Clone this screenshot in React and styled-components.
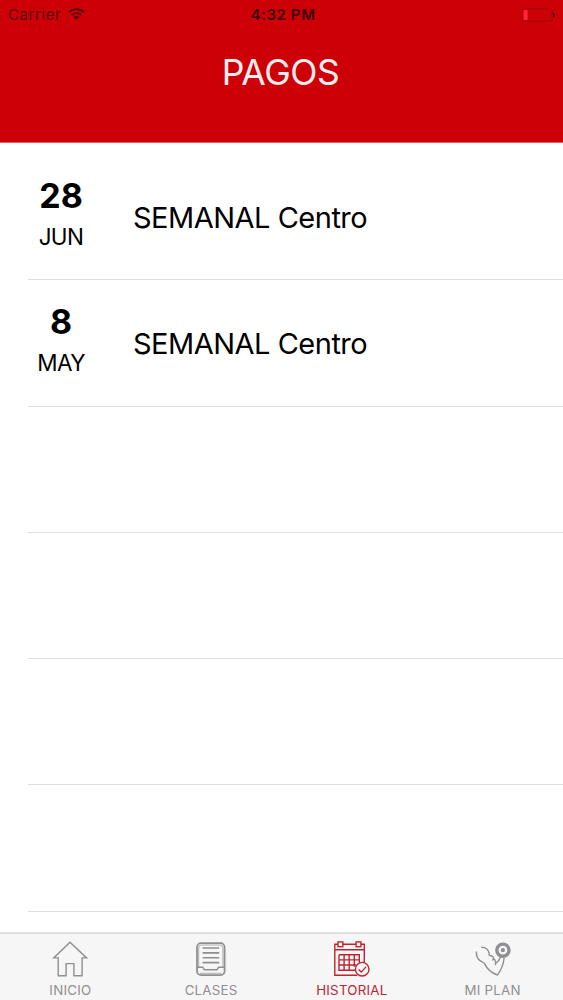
import React from "react";
import styled, { createGlobalStyle } from "styled-components";

const payments = [
  { day: "28", month: "JUN", name: "SEMANAL Centro" },
  { day: "8", month: "MAY", name: "SEMANAL Centro" },
];

const emptyRows = [1, 2, 3, 4];

function App() {
  return (
    <>
      <GlobalStyle />
      <Screen>
        <Header>
          <StatusBar>
            <Carrier>
              Carrier
              <WifiIcon />
            </Carrier>
            <Time>4:32 PM</Time>
            <Battery>
              <BatteryIcon />
            </Battery>
          </StatusBar>
          <Title>PAGOS</Title>
        </Header>
        <List>
          {payments.map((payment) => (
            <Row key={payment.month}>
              <DateBox>
                <Day>{payment.day}</Day>
                <Month>{payment.month}</Month>
              </DateBox>
              <Name>{payment.name}</Name>
            </Row>
          ))}
          {emptyRows.map((row) => (
            <Row key={row} />
          ))}
        </List>
        <TabBar>
          <Tab>
            <HomeIcon />
            <Label>INICIO</Label>
          </Tab>
          <Tab>
            <ClassesIcon />
            <Label>CLASES</Label>
          </Tab>
          <Tab $active>
            <CalendarIcon />
            <Label>HISTORIAL</Label>
          </Tab>
          <Tab>
            <ArmIcon />
            <Label>MI PLAN</Label>
          </Tab>
        </TabBar>
      </Screen>
    </>
  );
}

export default App;

function WifiIcon() {
  return (
    <svg width="17" height="12" viewBox="0 0 17 12" fill="none">
      <path d="M1 4.2a10.8 10.8 0 0 1 15 0" stroke="currentColor" strokeWidth="2" />
      <path d="M3.7 7a7 7 0 0 1 9.6 0" stroke="currentColor" strokeWidth="1.9" />
      <path d="M8.5 11.8 5.7 9a4.2 4.2 0 0 1 5.6 0z" fill="currentColor" />
    </svg>
  );
}

function BatteryIcon() {
  return (
    <svg width="35" height="14" viewBox="0 0 35 14" fill="none">
      <rect x="1.2" y="0.7" width="30" height="12.6" rx="2.5" stroke="#a40005" strokeWidth="1" />
      <rect x="2.6" y="2" width="4" height="10" rx="0.8" fill="#ff2638" />
      <path d="M32.6 5c1.3.3 1.3 3.8 0 4.1z" fill="#4d0002" stroke="#4d0002" />
    </svg>
  );
}

function HomeIcon() {
  return (
    <TabIcon viewBox="0 0 40 40">
      <path d="M8.2 19.9H3.8L20 4.3l16.6 15.6h-4.5v17.8h-8.2V25.6h-7.8v12.1H8.2z" />
    </TabIcon>
  );
}

function ClassesIcon() {
  return (
    <TabIcon viewBox="0 0 40 40">
      <rect x="6" y="5.2" width="27.6" height="32" rx="4.2" strokeWidth="1.8" />
      <path d="M7.7 29.3V10a3 3 0 0 1 3-3h18.2a3 3 0 0 1 3 3v19.3" strokeWidth="0.7" />
      <path d="M6 29.3h5.6c.8 0 1 2.5 2.2 2.5h11.8c1.2 0 1.4-2.5 2.2-2.5h5.8" />
      <path d="M9 35.3h21.5" strokeWidth="0.7" />
      <path d="M11.6 10h16.6M11.6 14.9h16.6M11.6 19.8h16.6M11.6 24.6h16.6" strokeWidth="1.6" />
    </TabIcon>
  );
}

function CalendarIcon() {
  return (
    <TabIcon viewBox="0 0 40 40">
      <path d="M6 6.3H2.8v30.9h22.5M10.9 6.3h13.2M29 6.3h3.3v17.8M2.8 11.7h29.5" />
      <rect x="6" y="3.9" width="4.8" height="4.8" />
      <rect x="24.1" y="3.9" width="4.8" height="4.8" />
      <path d="M7 16.8h20.3v7.9M7 16.8v15.4h16M7 21.9h20.3M7 27h17.3M12.1 16.8v15.4M17.2 16.8v15.4M22.3 16.8v12" />
      <circle cx="30.2" cy="31.2" r="6.8" />
      <path d="m26.6 31.4 2.7 2.7 4.7-5.2" />
    </TabIcon>
  );
}

function ArmIcon() {
  return (
    <TabIcon viewBox="0 0 40 40">
      <path d="M3.4 13.5c-.3 4.500 1.200 7.500 4 9.400 1.800 1.200 3.500 1 4.500 3.200 2.300 5.300 6.900 8.800 12.500 10.900 3.500-4.600 6-9.800 6.700-17" />
      <path d="M8.300 9.200c4.200-.1 7 2.400 7.900 6 .2 1-.1 1.600-.6 2.200M16.200 17.500c2.600.1 4.200 1 4.300 2.700 0 .9-.4 1.600-1.100 2.200M20.500 20.200c1.800 1.500 2.500 3.700 1.900 7M22.600 25.500c2-1.300 4-3.700 5.300-7" />
      <circle cx="29.900" cy="12.200" r="6.100" strokeWidth="3.400" />
      <circle cx="29.900" cy="12.200" r="2.100" fill="currentColor" stroke="none" />
    </TabIcon>
  );
}

const GlobalStyle = createGlobalStyle`
  * {
    box-sizing: border-box;
  }

  body {
    margin: 0;
    background: #ffffff;
    font-family: Inter, "Liberation Sans", sans-serif;
  }
`;

const Screen = styled.div`
  display: flex;
  flex-direction: column;
  height: 100vh;
  overflow: hidden;
`;

const Header = styled.header`
  flex: none;
  height: 143px;
  background: #cc0006;
  border-bottom: 1px solid #dd6468;
`;

const StatusBar = styled.div`
  display: grid;
  grid-template-columns: 1fr auto 1fr;
  align-items: center;
  height: 29px;
  padding: 0 7px 0 8px;
  color: #5a0003;
  font-size: 15px;
  line-height: 29px;
`;

const Carrier = styled.div`
  display: flex;
  align-items: center;
  gap: 7px;
  letter-spacing: 0.6px;

  svg {
    margin-top: -2px;
  }
`;

const Time = styled.div`
  padding-left: 2px;
  color: #3a0002;
  font-weight: 600;
  letter-spacing: 0.6px;
`;

const Battery = styled.div`
  display: flex;
  justify-content: flex-end;
`;

const Title = styled.h1`
  margin: 22px 0 0;
  padding-right: 2px;
  color: #ffeded;
  font-size: 35.5px;
  font-weight: 400;
  line-height: 44px;
  letter-spacing: -0.4px;
  text-align: center;
`;

const List = styled.main`
  flex: 1;
  min-height: 0;
  overflow: hidden;
  padding: 11px 0 0 28px;
`;

const Row = styled.div`
  display: flex;
  align-items: center;
  height: 126.3px;
  border-bottom: 1px solid #e0e0e0;
`;

const DateBox = styled.div`
  width: 66px;
  padding-top: 1px;
  text-align: center;
`;

const Day = styled.div`
  color: #000000;
  font-size: 34px;
  font-weight: 700;
  line-height: 40px;
`;

const Month = styled.div`
  color: #000000;
  font-size: 22.5px;
  line-height: 42px;
  letter-spacing: -0.6px;
`;

const Name = styled.div`
  margin-left: 39px;
  padding-top: 2px;
  color: #000000;
  font-size: 29px;
  line-height: 36px;
  letter-spacing: -0.5px;
`;

const TabBar = styled.nav`
  display: grid;
  grid-template-columns: repeat(4, 1fr);
  flex: none;
  height: 68px;
  background: #f7f6f7;
  border-top: 2px solid #e0dee0;
`;

const Tab = styled.div`
  display: flex;
  flex-direction: column;
  align-items: center;
  padding-top: 4px;
  color: ${(props) => (props.$active ? "#be2430" : "#8f8f91")};
`;

const TabIcon = styled.svg`
  width: 40px;
  height: 40px;
  fill: none;
  stroke: currentColor;
  stroke-width: 1.4;
`;

const Label = styled.span`
  font-size: 13.3px;
  line-height: 20px;
  letter-spacing: 0.25px;
  margin-top: 2px;
`;
